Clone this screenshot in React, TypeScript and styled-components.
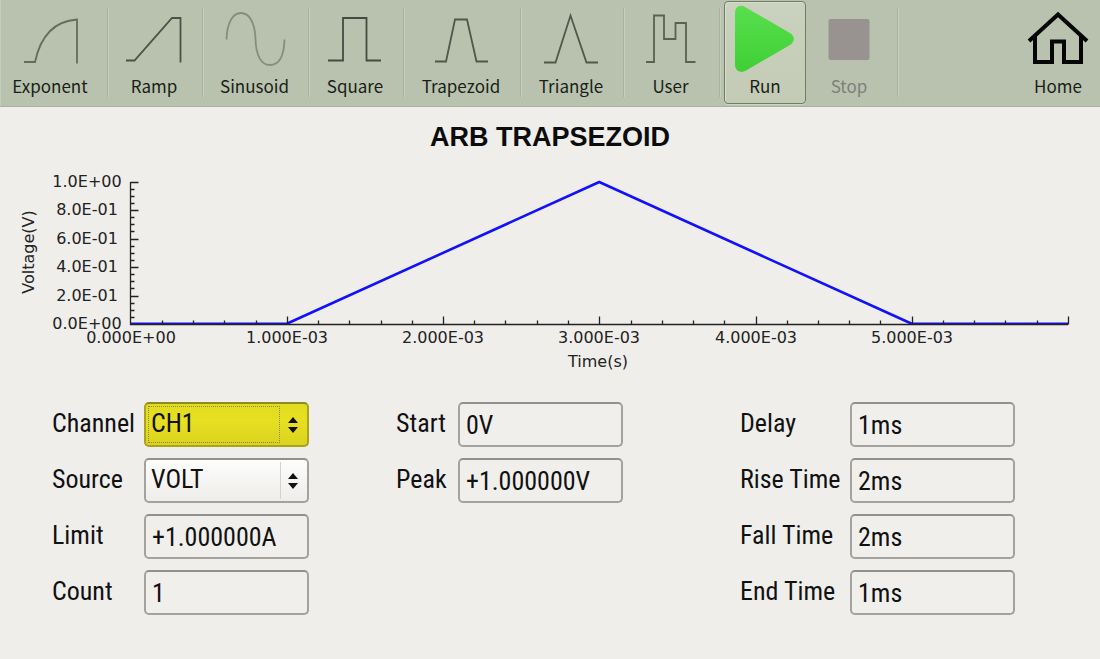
import React from "react";
import styled, { createGlobalStyle, css } from "styled-components";

const GlobalStyle = createGlobalStyle`
  *, *::before, *::after { box-sizing: border-box; }
  body {
    margin: 0;
    background: #efeeeb;
    color: #111;
    font-family: "Liberation Sans", Arial, sans-serif;
  }
`;

const narrowFont = css`
  font-family: "Roboto Condensed", "Liberation Sans", Arial, sans-serif;
  font-size: 26px;
  line-height: 32px;
`;

const Page = styled.div`
  display: flex;
  flex-direction: column;
  min-height: 100vh;
`;

const Toolbar = styled.nav`
  display: flex;
  height: 107px;
  background: #b9c2ae;
  box-shadow: inset 1px 0 0 #c6cdbd;
  border-bottom: 1px solid #a9b19f;
`;

const ToolCell = styled.div<{ $width: number }>`
  display: flex;
  justify-content: center;
  flex: 0 0 ${(p) => p.$width}px;
  padding: 1px 5px 0 0;
  background: linear-gradient(90deg, #a9b29f 50%, #c8cfbf 50%) no-repeat right 8px / 2px 89px;

  &:first-child {
    padding-right: 9px;
  }
`;

const RunCell = styled.div`
  display: flex;
  gap: 2px;
  flex: 0 0 178px;
  padding: 1px 0 0 3px;
  background: linear-gradient(90deg, #a9b29f 50%, #c8cfbf 50%) no-repeat right 8px / 2px 89px;
`;

const HomeCell = styled.div`
  margin-left: auto;
  padding: 1px 1px 0 0;
`;

const ToolButton = styled.button<{ $active?: boolean }>`
  display: flex;
  flex-direction: column;
  align-items: center;
  min-width: 82px;
  height: 103px;
  padding: 3px 0 0;
  border: 1px solid transparent;
  border-radius: 4px;
  background: none;
  color: #1a1e18;
  font-family: "Noto Sans CJK SC", "Noto Sans", sans-serif;
  font-size: 17px;
  line-height: 26px;
  white-space: nowrap;

  &:disabled {
    color: #7f807a;
  }

  ${(p) =>
    p.$active &&
    css`
      border-color: #6f7d63;
      background: linear-gradient(#cad2bf, #c3cbb6);
      box-shadow: inset 1px 1px 0 #d8decf, 0 1px 0 #cdd3c6;
    `}
`;

const ToolIcon = styled.svg`
  display: block;
  width: 64px;
  height: 68px;
  overflow: visible;
`;

const Title = styled.h1`
  margin: 14px 0 7px;
  text-align: center;
  font-size: 27px;
  line-height: 32px;
  color: #0c0c0c;
`;

const Chart = styled.svg`
  display: block;
  width: 100%;
  font-family: "DejaVu Sans", sans-serif;
  font-size: 16px;
  fill: #222;
`;

const Form = styled.form`
  display: grid;
  grid-template-columns: repeat(3, 1fr);
  align-items: start;
  padding: 22px 16px 43px 52px;
`;

const Group = styled.div<{ $label: number }>`
  display: grid;
  grid-template-columns: ${(p) => p.$label}px 165px;
  grid-auto-rows: 45px;
  row-gap: 11px;
`;

const Label = styled.label`
  ${narrowFont}
  padding-top: 5px;
  white-space: nowrap;
`;

const TextBox = styled.input`
  ${narrowFont}
  width: 100%;
  height: 45px;
  padding: 0 6px;
  border: 2px solid #a3a29f;
  border-top-color: #92918e;
  border-radius: 5px;
  background: #f0efec;
  color: #111;
  outline: none;
`;

const SelectFrame = styled.div`
  position: relative;
`;

const Select = styled.select<{ $accent?: boolean }>`
  ${narrowFont}
  appearance: none;
  width: 100%;
  height: 45px;
  padding: 0 32px 4px 5px;
  border: 2px solid ${(p) => (p.$accent ? "#aaa31e" : "#a3a29f")};
  border-top-color: ${(p) => (p.$accent ? "#8f8a20" : "#92918e")};
  border-radius: 5px;
  background: ${(p) =>
    p.$accent
      ? "linear-gradient(#e2dc20, #e6df22 40%, #dbd41f)"
      : "linear-gradient(#fdfdfc, #eeedea)"};
  color: #111;
  outline: none;
`;

const FocusRing = styled.span`
  position: absolute;
  inset: 4px 29px 4px 4px;
  border: 1px dotted #8e8930;
  pointer-events: none;
`;

const Divider = styled.span`
  position: absolute;
  inset: 4px 28px 4px auto;
  width: 1px;
  background: #d3d2cf;
  pointer-events: none;
`;

const Arrows = styled.svg`
  position: absolute;
  right: 11px;
  top: 15px;
  width: 10px;
  height: 16px;
  pointer-events: none;
`;

type Tool = { name: string; width: number; path: string; stroke: string };

const tools: Tool[] = [
  { name: "Exponent", width: 109, stroke: "#646c5e", path: "M6 57H17C23 29 37 16 59 14.5V58.5" },
  { name: "Ramp", width: 95, stroke: "#4b5247", path: "M4 55.5H12.5L50 13H58.5V57.5" },
  { name: "Sinusoid", width: 106, stroke: "#858e7d", path: "M3.5 34.5C4 17 10 8 18 8S32 17 32.5 34.5C33 50 38 60 47 60S61 51 61.5 34.5" },
  { name: "Square", width: 95, stroke: "#454b41", path: "M5 55.5H20V13H43.5V55.5H58" },
  { name: "Trapezoid", width: 117, stroke: "#50574b", path: "M6 56.5H17L26 14.5H38L47.5 56.5H59" },
  { name: "Triangle", width: 103, stroke: "#50574b", path: "M5 57.5H16.5L31.5 10.5L47.5 57.5H59" },
  { name: "User", width: 96, stroke: "#5a6154", path: "M7 57H15V10.5H25V34H36.5V18H47V57H56.5" },
];

const origin = { x: 130.5, y: 324.5 };
const xSpan = 937.5;
const ySpan = 142.5;
const xLabels = ["0.000E+00", "1.000E-03", "2.000E-03", "3.000E-03", "4.000E-03", "5.000E-03"];
const yLabels = ["0.0E+00", "2.0E-01", "4.0E-01", "6.0E-01", "8.0E-01", "1.0E+00"];
const px = (ms: number) => origin.x + (ms / 6) * xSpan;
const py = (volts: number) => origin.y - volts * ySpan;

const xTicks = Array.from({ length: 30 }, (_, i) => i + 1)
  .map((i) => `M${Math.round(px(i / 5)) + 0.5} ${origin.y}v${i % 5 ? -4 : -8}`)
  .join("");
const yTicks = Array.from({ length: 20 }, (_, i) => i + 1)
  .map((i) => `M${origin.x} ${Math.floor(py(i / 20)) + 0.5}h${i % 4 ? 4 : 8}`)
  .join("");

function WaveChart() {
  // The flat parts ride just above the axis line so that both stay visible.
  const wave = [[0, 0], [1, 0], [3, 1], [5, 0], [6, 0]]
    .map(([t, v]) => `${px(t)},${py(v) - (v ? 0 : 0.7)}`)
    .join(" ");
  return (
    <Chart viewBox="0 160 1100 220" role="img" aria-label="Voltage over time">
      <polyline points={wave} fill="none" stroke="#1111fa" strokeWidth="2.6" strokeLinejoin="bevel" />
      <path
        d={`M${origin.x} ${py(1)}V${origin.y}H${px(6)}${xTicks}${yTicks}`}
        fill="none"
        stroke="#222"
        strokeWidth="1.3"
      />
      {yLabels.map((t, i) => (
        <text key={t} x="87" y={Math.floor(py(i / 5)) + 5} textAnchor="middle">{t}</text>
      ))}
      {xLabels.map((t, i) => (
        <text key={t} x={Math.round(px(i))} y="343" textAnchor="middle">{t}</text>
      ))}
      <text x="598" y="367" textAnchor="middle">Time(s)</text>
      <text transform="translate(34 252) rotate(-90)" textAnchor="middle">Voltage(V)</text>
    </Chart>
  );
}

function UpDown() {
  return (
    <Arrows viewBox="0 0 10 16" aria-hidden="true">
      <path d="M0 6L5 0L10 6ZM0 10H10L5 16Z" fill="#111" />
    </Arrows>
  );
}

function Field({ id, label, value }: { id: string; label: string; value: string }) {
  return (
    <>
      <Label htmlFor={id}>{label}</Label>
      <TextBox id={id} defaultValue={value} />
    </>
  );
}

export default function App() {
  return (
    <Page>
      <GlobalStyle />
      <Toolbar aria-label="Waveforms">
        {tools.map((t) => (
          <ToolCell key={t.name} $width={t.width}>
            <ToolButton type="button">
              <ToolIcon viewBox="0 0 64 68" aria-hidden="true">
                <path d={t.path} fill="none" stroke={t.stroke} strokeWidth="1.8" />
              </ToolIcon>
              {t.name}
            </ToolButton>
          </ToolCell>
        ))}
        <RunCell>
          <ToolButton type="button" $active>
            <ToolIcon viewBox="0 0 64 68" aria-hidden="true">
              <defs>
                <linearGradient id="run" x1="0" y1="0" x2="0" y2="1">
                  <stop offset="0" stopColor="#58e04e" />
                  <stop offset="1" stopColor="#3fcf35" />
                </linearGradient>
              </defs>
              <path
                d="M2 8C2 2 7 -1 12 2L57 28C62 31 62 37 57 40L13 65.5C7 69 2 65 2 60Z"
                fill="url(#run)"
              />
            </ToolIcon>
            Run
          </ToolButton>
          <ToolButton type="button" disabled>
            <ToolIcon viewBox="0 0 64 68" aria-hidden="true">
              <rect x="11.5" y="14" width="41" height="41" rx="2" fill="#989391" />
            </ToolIcon>
            Stop
          </ToolButton>
        </RunCell>
        <HomeCell>
          <ToolButton type="button">
            <ToolIcon viewBox="0 0 64 68" aria-hidden="true">
              <path
                d="M3 36L32 9.5L61 36M9 31V57H26V36.5H38V57H55V31"
                fill="none"
                stroke="#050505"
                strokeWidth="4"
              />
            </ToolIcon>
            Home
          </ToolButton>
        </HomeCell>
      </Toolbar>

      <main>
        <Title>ARB TRAPSEZOID</Title>
        <WaveChart />
        <Form>
          <Group $label={92}>
            <Label htmlFor="channel">Channel</Label>
            <SelectFrame>
              <Select id="channel" $accent defaultValue="CH1">
                <option>CH1</option>
              </Select>
              <FocusRing />
              <UpDown />
            </SelectFrame>
            <Label htmlFor="source">Source</Label>
            <SelectFrame>
              <Select id="source" defaultValue="VOLT">
                <option>VOLT</option>
              </Select>
              <Divider />
              <UpDown />
            </SelectFrame>
            <Field id="limit" label="Limit" value="+1.000000A" />
            <Field id="count" label="Count" value="1" />
          </Group>
          <Group $label={62}>
            <Field id="start" label="Start" value="0V" />
            <Field id="peak" label="Peak" value="+1.000000V" />
          </Group>
          <Group $label={110}>
            <Field id="delay" label="Delay" value="1ms" />
            <Field id="rise" label="Rise Time" value="2ms" />
            <Field id="fall" label="Fall Time" value="2ms" />
            <Field id="end" label="End Time" value="1ms" />
          </Group>
        </Form>
      </main>
    </Page>
  );
}
